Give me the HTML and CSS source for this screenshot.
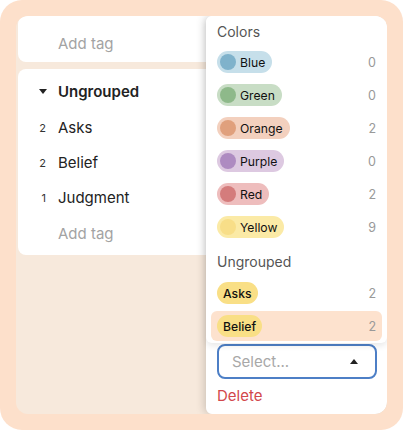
FILE: index.html
```html
<!DOCTYPE html>
<html>
<head>
<meta charset="utf-8">
<link rel="stylesheet" href="styles.css">
</head>
<body>
<div class="frame">
  <div class="stage">
    <div class="cards">
      <div class="card card-top">
        <div class="row add"><span class="lead"></span><span class="label muted">Add tag</span></div>
      </div>
      <div class="card card-group">
        <div class="row head"><span class="lead"><span class="caret-down"></span></span><span class="label bold">Ungrouped</span></div>
        <div class="row"><span class="lead num">2</span><span class="label">Asks</span></div>
        <div class="row"><span class="lead num">2</span><span class="label">Belief</span></div>
        <div class="row"><span class="lead num">1</span><span class="label">Judgment</span></div>
        <div class="row add-last"><span class="lead"></span><span class="label muted">Add tag</span></div>
      </div>
    </div>
    <div class="popover">
      <div class="menu">
        <div class="menu-head first">Colors</div>
        <div class="item"><span class="pill blue"><span class="dot"></span>Blue</span><span class="count">0</span></div>
        <div class="item"><span class="pill green"><span class="dot"></span>Green</span><span class="count">0</span></div>
        <div class="item"><span class="pill orange"><span class="dot"></span>Orange</span><span class="count">2</span></div>
        <div class="item"><span class="pill purple"><span class="dot"></span>Purple</span><span class="count">0</span></div>
        <div class="item"><span class="pill red"><span class="dot"></span>Red</span><span class="count">2</span></div>
        <div class="item"><span class="pill yellow"><span class="dot"></span>Yellow</span><span class="count">9</span></div>
        <div class="menu-head second">Ungrouped</div>
        <div class="item"><span class="pill tag">Asks</span><span class="count">2</span></div>
        <div class="item active"><span class="pill tag">Belief</span><span class="count">2</span></div>
      </div>
      <div class="select"><span class="placeholder">Select...</span><span class="caret-up"></span></div>
      <div class="delete">Delete</div>
    </div>
  </div>
</div>
</body>
</html>
```
FILE: styles.css
```css
* { box-sizing: border-box; }
html, body { margin: 0; padding: 0; background: #ffffff; }
body {
  font-family: Inter, "Noto Sans", sans-serif;
  width: 403px;
  height: 430px;
}
.frame {
  width: 403px;
  height: 430px;
  background: #fde0cb;
  border-radius: 22px;
  padding: 16px 16px 16px 16px;
}
.stage {
  position: relative;
  width: 371px;
  height: 398px;
  background: #f7e9dc;
  border-radius: 12px;
  overflow: hidden;
}
.cards {
  display: flex;
  flex-direction: column;
  gap: 7px;
  padding-left: 2px;
}
.card {
  background: #ffffff;
  border-radius: 8px;
  padding-left: 16px;
}
.card-top {
  height: 46px;
  padding-top: 17px;
}
.card-group {
  padding-top: 3px;
  padding-bottom: 3px;
}
.row {
  display: flex;
  align-items: center;
  height: 35px;
  gap: 8px;
}
.card-top .row { height: 20px; }
.row.head { height: 38px; }
.row.add-last { height: 37px; }
.lead {
  width: 16px;
  display: flex;
  justify-content: flex-end;
  padding-right: 4px;
}
.num {
  font-size: 11px;
  color: #333;
}
.caret-down {
  width: 0; height: 0;
  border-left: 4px solid transparent;
  border-right: 4px solid transparent;
  border-top: 5px solid #222;
  margin-right: -1px;
}
.label {
  font-size: 15px;
  color: #222;
}
.label.bold { font-weight: 600; }
.label.muted { color: #a3a3a3; }

.popover {
  position: absolute;
  top: 0;
  right: 0;
  bottom: 0;
  width: 181px;
  background: #ffffff;
  border-radius: 6px 12px 12px 6px;
  box-shadow: -2px 0 9px rgba(0, 0, 0, 0.17);
  display: flex;
  flex-direction: column;
}
.menu {
  background: #ffffff;
  padding: 0 5px 2px 5px;
  border-radius: 6px;
  box-shadow: 0 3px 6px rgba(0, 0, 0, 0.09);
  position: relative;
  z-index: 1;
}
.menu-head {
  font-size: 14px;
  color: #555;
  display: flex;
  align-items: center;
  padding-left: 6px;
}
.menu-head.first { height: 31px; }
.menu-head.second { height: 33px; }
.item {
  height: 30px;
  margin-bottom: 3px;
  display: flex;
  align-items: center;
  justify-content: space-between;
  padding: 0 6px 0 6px;
  border-radius: 6px;
}
.item:last-child { margin-bottom: 0; }
.item.active { background: #fde2ce; }
.pill {
  display: inline-flex;
  align-items: center;
  height: 22px;
  border-radius: 11px;
  padding: 0 7px 0 3px;
  font-size: 12.2px;
  color: #111;
  gap: 4px;
}
.dot {
  width: 16px;
  height: 16px;
  border-radius: 50%;
}
.pill.tag { padding: 0 6px; background: #f9df86; font-weight: 500; }
.blue { background: #c6dfea; }
.blue .dot { background: #7fb2cb; }
.green { background: #c8ddc5; }
.green .dot { background: #8eb98a; }
.orange { background: #f3d0be; }
.orange .dot { background: #e0a07d; }
.purple { background: #ddc9e1; }
.purple .dot { background: #ae8bc1; }
.red { background: #eebdbd; }
.red .dot { background: #d47c7c; }
.yellow { background: #fbeaa6; }
.yellow .dot { background: #f8de88; }
.count {
  font-size: 12.5px;
  color: #999;
}
.select {
  margin: 1px 10px 0 11px;
  height: 35px;
  border: 2px solid #4d7fc6;
  border-radius: 8px;
  display: flex;
  align-items: center;
  justify-content: space-between;
  padding: 0 17px 0 13px;
}
.placeholder {
  font-size: 15px;
  color: #a8a8a8;
}
.caret-up {
  width: 0; height: 0;
  border-left: 4px solid transparent;
  border-right: 4px solid transparent;
  border-bottom: 5px solid #222;
}
.delete {
  margin: 7px 0 0 11px;
  font-size: 15px;
  line-height: 20px;
  color: #d2474b;
}
```
